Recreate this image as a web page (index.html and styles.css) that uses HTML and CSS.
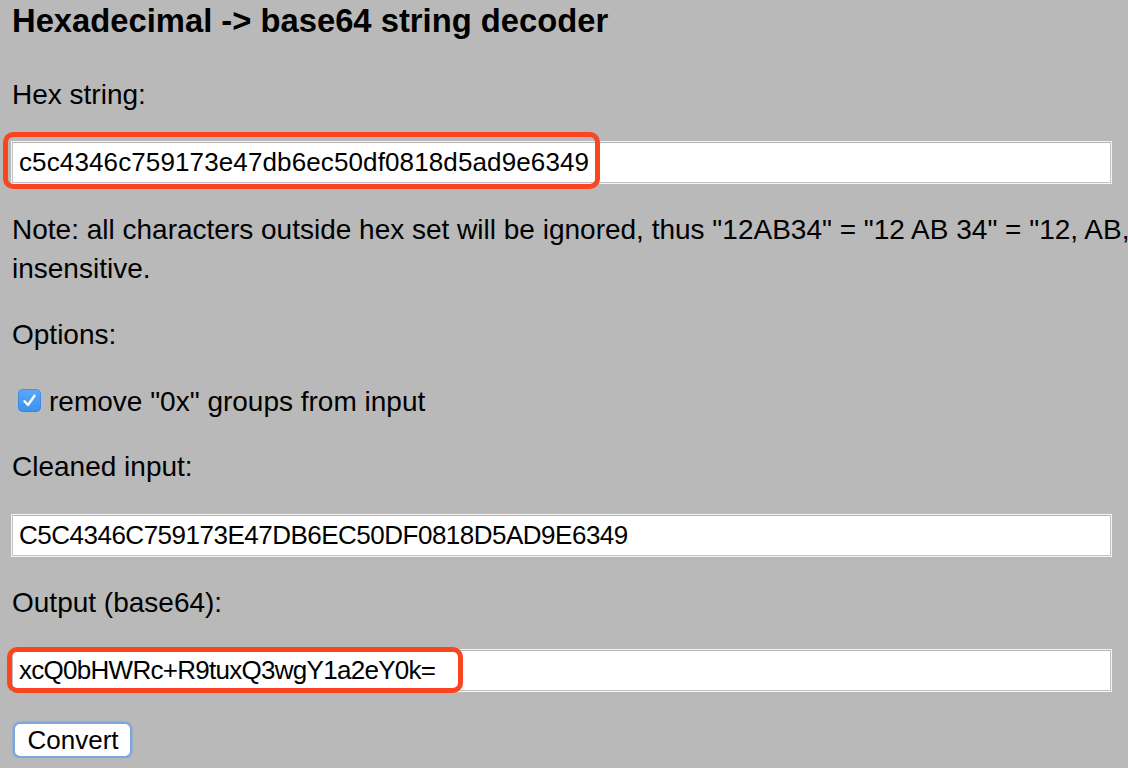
FILE: index.html
```html
<!DOCTYPE html>
<html lang="en">
<head>
<meta charset="utf-8">
<title>Hexadecimal -&gt; base64 string decoder</title>
<link rel="stylesheet" href="styles.css">
</head>
<body>
<main class="page">
  <h3 class="title">Hexadecimal -&gt; base64 string decoder</h3>

  <p class="text label-hex">Hex string:</p>
  <div class="field-wrap wrap-hex">
    <input class="field field-hex" type="text" value="c5c4346c759173e47db6ec50df0818d5ad9e6349">
    <span class="mark mark-hex"></span>
  </div>

  <p class="text note">Note: all characters outside hex set will be ignored, thus "12AB34" = "12 AB 34" = "12, AB, 34" and so on. Case<br>insensitive.</p>

  <p class="text options">Options:</p>

  <label class="text check-row">
    <span class="checkbox">
      <svg viewBox="0 0 23 23" width="23" height="23" aria-hidden="true">
        <path d="M6.5 12.2 L10 16 L16.5 6.8" fill="none" stroke="#fff" stroke-width="2.4" stroke-linecap="round" stroke-linejoin="round"/>
      </svg>
    </span>
    <span class="check-text">remove "0x" groups from input</span>
  </label>

  <p class="text label-clean">Cleaned input:</p>
  <div class="field-wrap wrap-clean">
    <input class="field field-clean" type="text" value="C5C4346C759173E47DB6EC50DF0818D5AD9E6349">
  </div>

  <p class="text label-out">Output (base64):</p>
  <div class="field-wrap wrap-out">
    <input class="field field-out" type="text" value="xcQ0bHWRc+R9tuxQ3wgY1a2eY0k=">
    <span class="mark mark-out"></span>
  </div>

  <button class="convert" type="button">Convert</button>
</main>
</body>
</html>
```
FILE: styles.css
```css
html {
  background: #b9b9b9;
  overflow: hidden;
}

body {
  margin: 0;
  font-family: "Liberation Sans", Arial, Helvetica, sans-serif;
  font-size: 28px;
  color: #000;
  overflow: hidden;
}

.page {
  display: flex;
  flex-direction: column;
  align-items: flex-start;
  padding: 0 0 0 12px;
}

.title {
  font-size: 32.76px;
  line-height: 40px;
  font-weight: bold;
  margin: 1px 0 34px;
  white-space: nowrap;
}

.text {
  line-height: 39px;
  margin: 0 0 28px;
  white-space: nowrap;
}

.note {
  margin-bottom: 27px;
}

.check-row {
  display: flex;
  align-items: center;
  margin-bottom: 26px;
}

.checkbox {
  display: block;
  width: 23px;
  height: 23px;
  margin: -2px 8px 0 6px;
  border-radius: 5px;
  background: linear-gradient(#5aa8f8, #3a91f0);
  box-shadow: inset 0 0 0 1px rgba(30, 110, 210, 0.35);
}

.checkbox svg {
  display: block;
}

.label-clean {
  margin-bottom: 29px;
}

.field-wrap {
  position: relative;
  margin: 0 0 27px;
}

.wrap-out {
  margin-bottom: 31px;
}

.field {
  display: block;
  box-sizing: border-box;
  width: 1099px;
  height: 41px;
  margin: 0;
  padding: 0 6px;
  border: 1px solid #c2c2c2;
  border-top-color: #b4b4b4;
  box-shadow: 0 0 0 1px #f4f4f4;
  background: #fff;
  font-family: "Liberation Sans", Arial, Helvetica, sans-serif;
  font-size: 26px;
  color: #000;
  outline: none;
}

.field-hex {
  letter-spacing: 0.12px;
}

.field-clean {
  letter-spacing: -0.5px;
}

.field-out {
  letter-spacing: -0.72px;
}

.mark {
  position: absolute;
  box-sizing: border-box;
  border: 5px solid #fb4520;
  border-radius: 10px;
  pointer-events: none;
}

.mark-hex {
  left: -9px;
  top: -10px;
  width: 597px;
  height: 57px;
}

.mark-out {
  left: -5px;
  top: -3px;
  width: 456px;
  height: 46px;
}

.convert {
  box-sizing: border-box;
  width: 119px;
  height: 36px;
  margin: 0 0 0 1px;
  padding: 0 0 0 1px;
  border: 2px solid #7ba7df;
  border-radius: 7px;
  background: #fff;
  box-shadow: 0 0 1px 1px rgba(120, 165, 225, 0.45);
  font-family: "Liberation Sans", Arial, Helvetica, sans-serif;
  font-size: 26px;
  color: #000;
}
```
